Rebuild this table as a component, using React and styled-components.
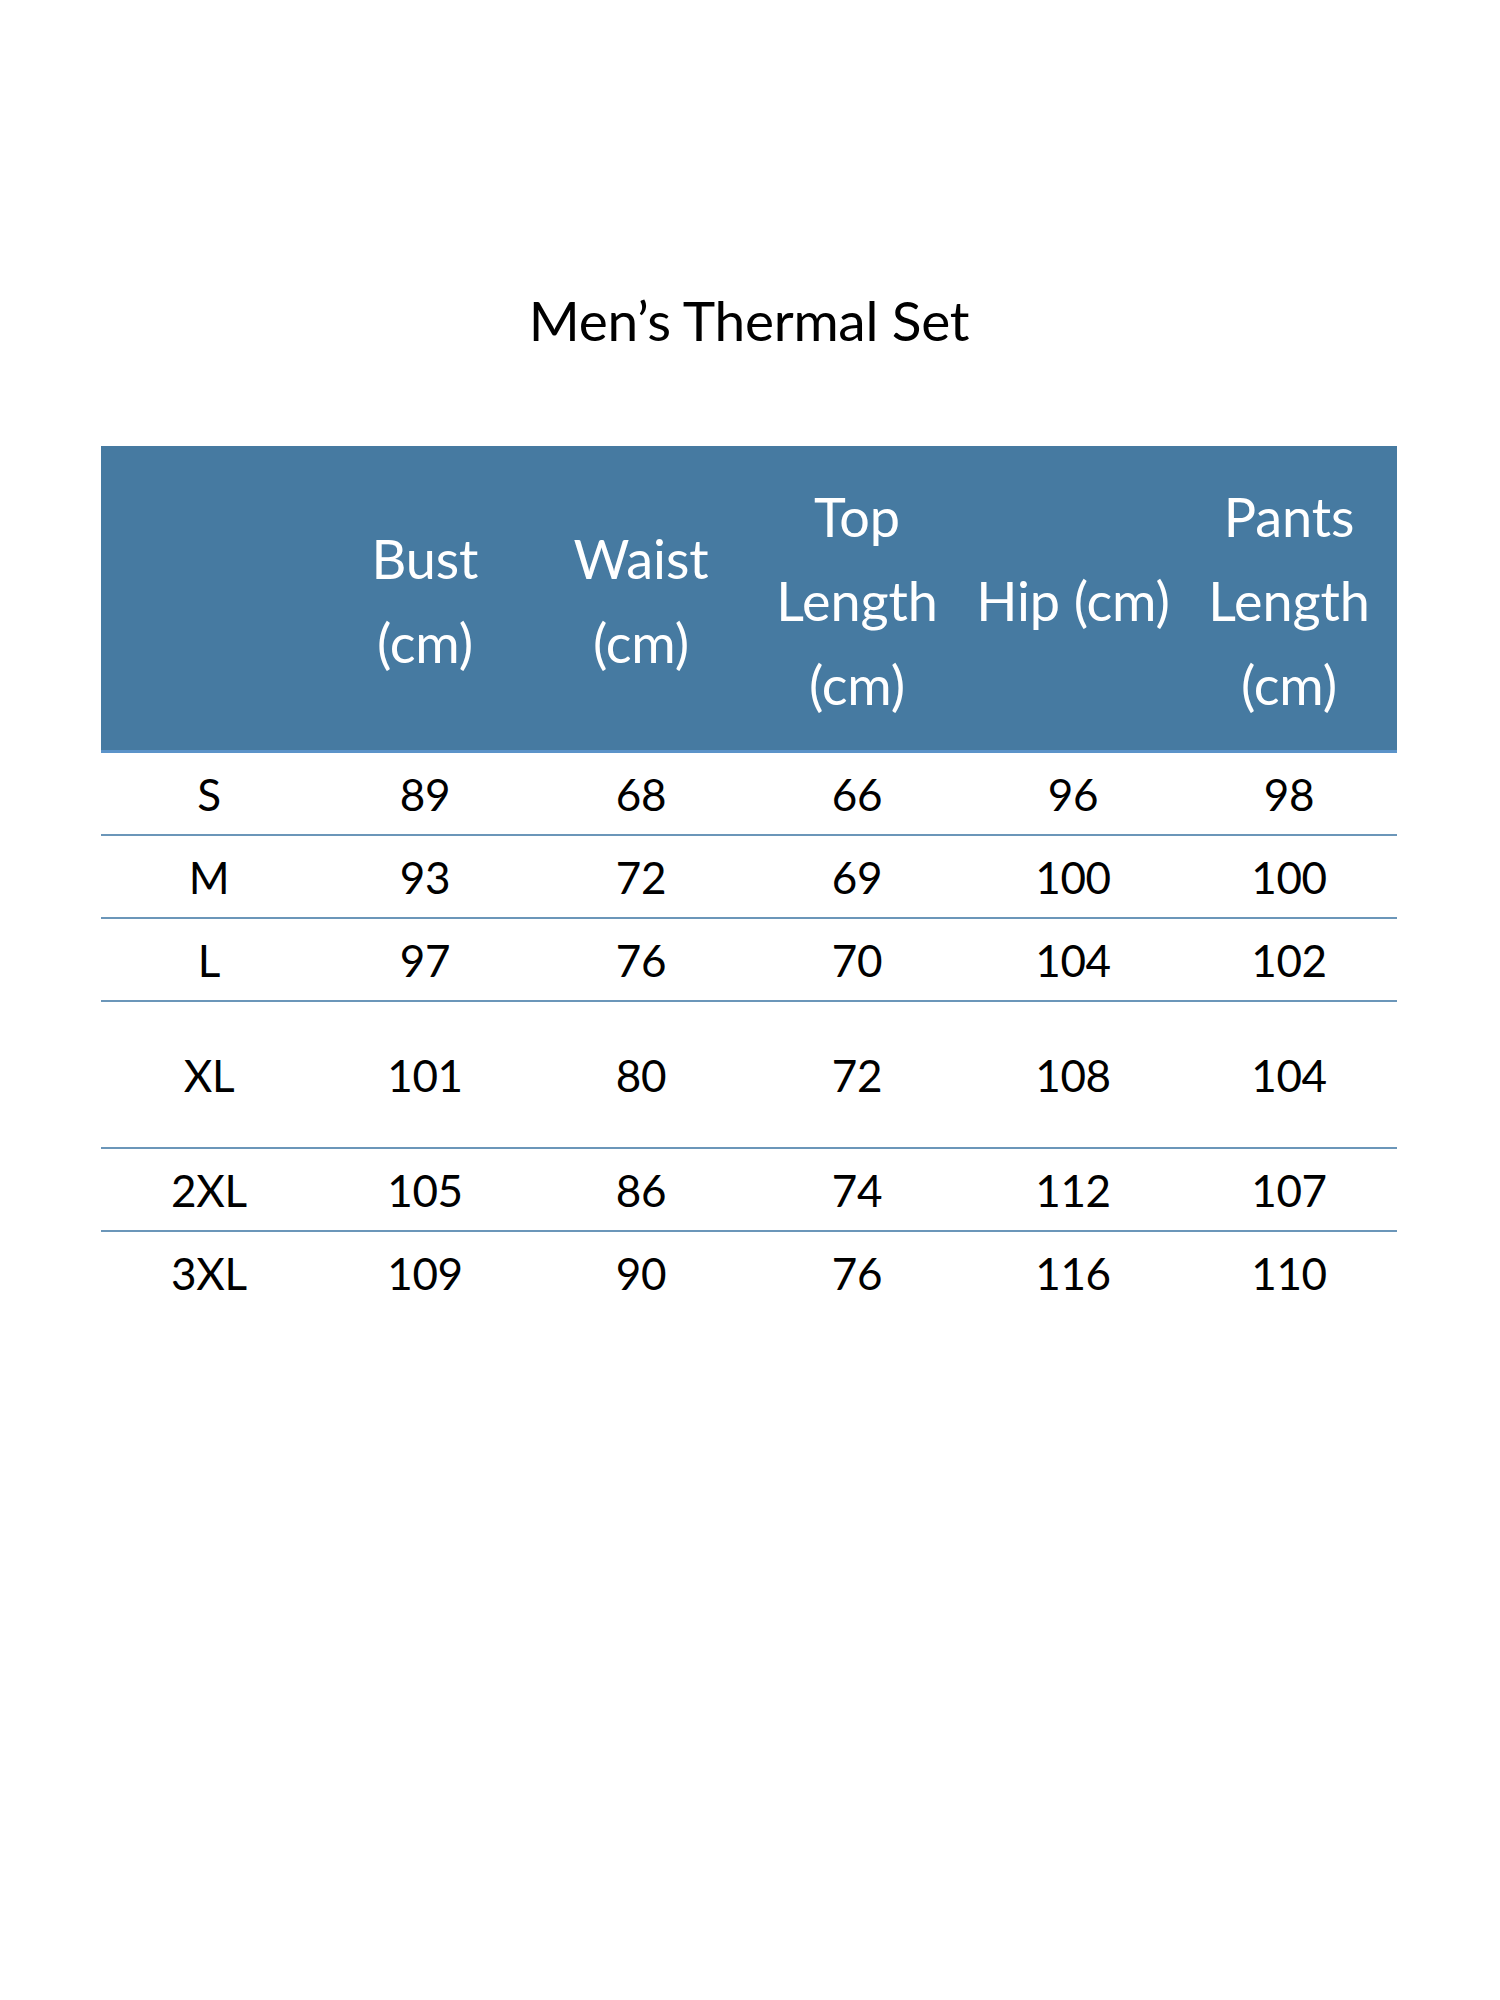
import React from 'react';
import styled, { createGlobalStyle } from 'styled-components';

const GlobalStyle = createGlobalStyle`
  html, body {
    margin: 0;
    padding: 0;
    background: #ffffff;
  }
  body {
    font-family: Lato, "Liberation Sans", sans-serif;
    color: #000;
  }
`;

const Page = styled.div`
  width: 1500px;
  height: 2000px;
  padding: 0 103px 0 101px;
  box-sizing: border-box;
  display: flex;
  flex-direction: column;
`;

const Title = styled.h1`
  margin: 0 0 93px;
  padding-top: 287px;
  height: 66px;
  font-size: 55px;
  font-weight: 400;
  line-height: 66px;
  text-align: center;
  letter-spacing: -0.3px;
`;

const Table = styled.div`
  display: grid;
  grid-template-columns: repeat(6, 1fr);
`;

const HeadCell = styled.div`
  height: 298px;
  background: #467aa1;
  border-bottom: 3px solid #5b93c9;
  color: #fff;
  font-size: 54px;
  line-height: 84px;
  letter-spacing: -0.1px;
  display: flex;
  align-items: center;
  justify-content: center;
  text-align: center;
  padding-top: 6px;
  white-space: nowrap;
`;

const Cell = styled.div`
  height: ${({ $tall }) => ($tall ? 145 : 81)}px;
  border-bottom: ${({ $last }) => ($last ? 'none' : '2px solid #6b96b9')};
  font-size: 44px;
  display: flex;
  align-items: center;
  justify-content: center;
  letter-spacing: -0.3px;
`;

const headers = [
  [],
  ['Bust', '(cm)'],
  ['Waist', '(cm)'],
  ['Top', 'Length', '(cm)'],
  ['Hip (cm)'],
  ['Pants', 'Length', '(cm)'],
];

const rows = [
  ['S', '89', '68', '66', '96', '98'],
  ['M', '93', '72', '69', '100', '100'],
  ['L', '97', '76', '70', '104', '102'],
  ['XL', '101', '80', '72', '108', '104'],
  ['2XL', '105', '86', '74', '112', '107'],
  ['3XL', '109', '90', '76', '116', '110'],
];

const App = () => {
  return (
    <>
      <GlobalStyle />
      <Page>
        <Title>Men’s Thermal Set</Title>
        <Table>
          {headers.map((lines, i) => (
            <HeadCell key={`h${i}`}>
              <div>
                {lines.map((l) => (
                  <div key={l}>{l}</div>
                ))}
              </div>
            </HeadCell>
          ))}
          {rows.map((row, r) =>
            row.map((v, c) => (
              <Cell key={`${r}-${c}`} $tall={r === 3} $last={r === rows.length - 1}>
                {v}
              </Cell>
            ))
          )}
        </Table>
      </Page>
    </>
  );
};

export default App;
